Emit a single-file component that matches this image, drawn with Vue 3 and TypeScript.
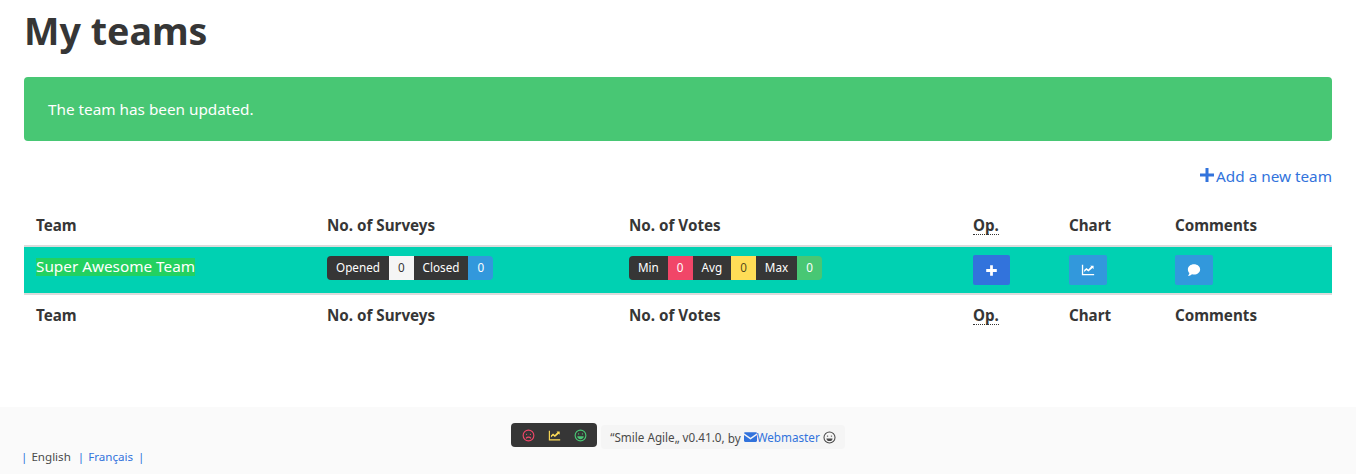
<script setup lang="ts">
interface Part {
  label: string
  kind: string
}

const surveys: Part[] = [
  { label: 'Opened', kind: 'dark' },
  { label: '0', kind: 'light' },
  { label: 'Closed', kind: 'dark' },
  { label: '0', kind: 'info' },
]

const votes: Part[] = [
  { label: 'Min', kind: 'dark' },
  { label: '0', kind: 'danger' },
  { label: 'Avg', kind: 'dark' },
  { label: '0', kind: 'warning' },
  { label: 'Max', kind: 'dark' },
  { label: '0', kind: 'success' },
]

const columns = ['Team', 'No. of Surveys', 'No. of Votes', 'Op.', 'Chart', 'Comments']
</script>

<template>
  <main class="page">
    <section class="content">
      <h1 class="title">My teams</h1>
      <div class="notification">The team has been updated.</div>
      <div class="actions">
        <a class="add-link">
          <svg class="add-icon" viewBox="0 0 16 16"><path d="M6.5 1h3v5.500H15v3H9.500V15h-3V9.500H1v-3h5.500z" /></svg>Add a new team
        </a>
      </div>
      <table class="teams">
        <colgroup>
          <col class="c1" /><col class="c2" /><col class="c3" /><col class="c4" /><col class="c5" /><col class="c6" />
        </colgroup>
        <thead>
          <tr>
            <th v-for="col in columns" :key="col"><abbr v-if="col === 'Op.'">{{ col }}</abbr><template v-else>{{ col }}</template></th>
          </tr>
        </thead>
        <tbody>
          <tr>
            <td><span class="team-name">Super Awesome Team</span></td>
            <td>
              <div class="tags">
                <span v-for="(p, i) in surveys" :key="i" class="tag" :class="p.kind">{{ p.label }}</span>
              </div>
            </td>
            <td>
              <div class="tags">
                <span v-for="(p, i) in votes" :key="i" class="tag" :class="p.kind">{{ p.label }}</span>
              </div>
            </td>
            <td>
              <a class="btn btn-link">
                <svg viewBox="0 0 16 16" width="13" height="13"><path d="M6.300 1.500h3.400v4.800h4.800v3.400H9.700v4.800H6.300V9.700H1.500V6.300h4.800z" fill="#fff" /></svg>
              </a>
            </td>
            <td>
              <a class="btn btn-info">
                <svg viewBox="0 0 16 16" width="14" height="14"><path d="M1 2h1.500v10.500H15V14H1z M3.600 10.400V8l2.600-2.400 2.200 1.700L11.600 4 10.400 3H14.400v4l-1.200-1.200-4.700 4L6.200 8z" fill="#fff" /></svg>
              </a>
            </td>
            <td>
              <a class="btn btn-info">
                <svg viewBox="0 0 16 16" width="14" height="14"><path d="M8 1.500c3.900 0 7 2.600 7 5.800s-3.100 5.800-7 5.800c-.8 0-1.500-.1-2.200-.3C4.600 13.800 3 14.600 1 14.700c.9-.9 1.600-2 1.800-3.200C1.700 10.400 1 8.900 1 7.300 1 4.100 4.100 1.500 8 1.500z" fill="#fff" /></svg>
              </a>
            </td>
          </tr>
        </tbody>
        <tfoot>
          <tr>
            <th v-for="col in columns" :key="col"><abbr v-if="col === 'Op.'">{{ col }}</abbr><template v-else>{{ col }}</template></th>
          </tr>
        </tfoot>
      </table>
    </section>

    <footer class="footer">
      <div class="footer-center">
        <div class="logo-box">
          <svg viewBox="0 0 16 16" width="13" height="13" fill="none" stroke="#f14668" stroke-width="1.400">
            <circle cx="8" cy="8" r="6.600" />
            <circle cx="5.600" cy="6.500" r=".8" fill="#f14668" stroke="none" />
            <circle cx="10.400" cy="6.500" r=".8" fill="#f14668" stroke="none" />
            <path d="M5 11.500c1.500-2 4.500-2 6 0" />
          </svg>
          <svg viewBox="0 0 16 16" width="13" height="13"><path d="M1 2h1.400v10.600H15V14H1z M3.600 10.400V8l2.600-2.400 2.200 1.700L11.600 4 10.400 3H14.400v4l-1.200-1.200-4.700 4L6.200 8z" fill="#ffdd57" /></svg>
          <svg viewBox="0 0 16 16" width="13" height="13" fill="none" stroke="#48c774" stroke-width="1.400">
            <circle cx="8" cy="8" r="6.600" />
            <circle cx="5.600" cy="6" r=".8" fill="#48c774" stroke="none" />
            <circle cx="10.400" cy="6" r=".8" fill="#48c774" stroke="none" />
            <path d="M4 9h8c0 2-1.800 3.500-4 3.500S4 11 4 9z" fill="#48c774" stroke="none" />
          </svg>
        </div>
        <div class="version">
          <span>“Smile Agile„ v0.41.0,</span>
          <span class="by">by</span>
          <a class="mail">
            <svg viewBox="0 0 16 12" width="13" height="10"><path d="M0 1.500C0 .7.700 0 1.500 0h13c.8 0 1.500.7 1.500 1.500L8 7 0 1.500z M0 3.400V10.500c0 .8.700 1.500 1.500 1.500h13c.8 0 1.500-.7 1.500-1.500V3.400L8 9 0 3.400z" fill="#3273dc" /></svg>Webmaster
          </a>
          <svg viewBox="0 0 16 16" width="13" height="13" fill="none" stroke="#4a4a4a" stroke-width="1.300">
            <circle cx="8" cy="8" r="6.800" />
            <circle cx="5.600" cy="6.300" r=".9" fill="#4a4a4a" stroke="none" />
            <circle cx="10.400" cy="6.300" r=".9" fill="#4a4a4a" stroke="none" />
            <path d="M4.200 9.200h7.600c0 1.900-1.700 3.200-3.800 3.200s-3.800-1.300-3.800-3.200z" fill="#4a4a4a" stroke="none" />
          </svg>
        </div>
      </div>
      <div class="langs">
        <span class="sep">|</span><span class="lang">English</span><span class="sep">|</span><a class="lang link">Français</a><span class="sep">|</span>
      </div>
    </footer>
  </main>
</template>

<style>
body {
  background: #fff;
  overflow: hidden;
}
</style>

<style scoped>
.page {
  width: 1356px;
  height: 474px;
  display: flex;
  flex-direction: column;
  font-family: "Noto Sans", "Open Sans", sans-serif;
  color: #4a4a4a;
  font-size: 16px;
}

.content {
  flex: 1;
  padding: 0 24px;
}

.title {
  margin: 0;
  height: 77px;
  padding-top: 8px;
  box-sizing: border-box;
  font-size: 37.600px;
  line-height: 46px;
  font-weight: 700;
  color: #363636;
}

.notification {
  height: 64px;
  box-sizing: border-box;
  padding: 0 24px;
  display: flex;
  align-items: center;
  background: #48c774;
  color: #fff;
  border-radius: 4px;
  font-size: 15.300px;
}

.actions {
  display: flex;
  justify-content: flex-end;
  height: 64px;
  padding-top: 25px;
  box-sizing: border-box;
}

.add-link {
  color: #3273dc;
  font-size: 15.300px;
  line-height: 22px;
  height: 22px;
  margin-top: -1px;
  display: flex;
  align-items: center;
}

.add-icon {
  width: 16px;
  height: 16px;
  fill: #3273dc;
  margin-top: -3px;
  margin-right: 1px;
}

.teams {
  width: 1308px;
  table-layout: fixed;
  border-collapse: collapse;
  color: #363636;
}

.c1 { width: 291px; }
.c2 { width: 302px; }
.c3 { width: 344px; }
.c4 { width: 96px; }
.c5 { width: 106px; }
.c6 { width: 169px; }

th {
  text-align: left;
  font-weight: 700;
  padding: 0 12px;
  height: 40px;
  font-size: 15.200px;
}

thead th {
  border-bottom: 2px solid #dbdbdb;
}

tfoot th {
  border-top: 2px solid #dbdbdb;
  height: 40px;
}

abbr {
  display: inline-block;
  line-height: 17px;
  border-bottom: 1px dotted #363636;
}

tbody tr {
  background: #00d1b2;
  height: 46px;
}

td {
  padding: 8px 12px;
  vertical-align: top;
}

.team-name {
  background: #23d160;
  color: #fff;
  font-size: 15.300px;
  display: inline-block;
  height: 18px;
  line-height: 17px;
  margin-top: 3px;
}

.tags {
  display: inline-flex;
  border-radius: 4px;
  overflow: hidden;
}

.tag {
  height: 24px;
  line-height: 23px;
  padding: 0 9px;
  font-size: 11.700px;
  color: #fff;
}

.dark { background: #363636; }
.light { background: #f5f5f5; color: #363636; }
.info { background: #3298dc; }
.danger { background: #f14668; }
.warning { background: #ffdd57; color: rgba(0, 0, 0, .7); }
.success { background: #48c774; }

.btn {
  display: flex;
  align-items: center;
  justify-content: center;
  width: 37px;
  height: 30px;
  border-radius: 2px;
}

.btn-link { background: #3273dc; }
.btn-info { background: #3298dc; width: 38px; }

.footer {
  position: relative;
  height: 67px;
  background: #fafafa;
  flex: none;
}

.footer-center {
  display: flex;
  justify-content: center;
  align-items: flex-start;
  gap: 4px;
  padding-top: 16px;
}

.logo-box {
  display: flex;
  align-items: center;
  gap: 13px;
  height: 24px;
  padding: 0 10.500px;
  background: #363636;
  border-radius: 4px;
}

.version {
  display: flex;
  align-items: center;
  gap: 3px;
  margin-top: 2px;
  height: 24px;
  padding: 0 9px;
  background: #f5f5f5;
  border-radius: 4px;
  font-size: 11.700px;
  white-space: nowrap;
}

.by {
  margin-top: 2px;
}

.mail {
  display: inline-flex;
  align-items: center;
  color: #3273dc;
}

.langs {
  position: absolute;
  left: 21px;
  top: 41px;
  display: flex;
  align-items: center;
  font-size: 11.600px;
  line-height: 18px;
}

.sep {
  color: #3273dc;
}

.lang {
  padding: 0 7px 0 4px;
}

.link {
  color: #3273dc;
  padding-right: 5px;
}
</style>
